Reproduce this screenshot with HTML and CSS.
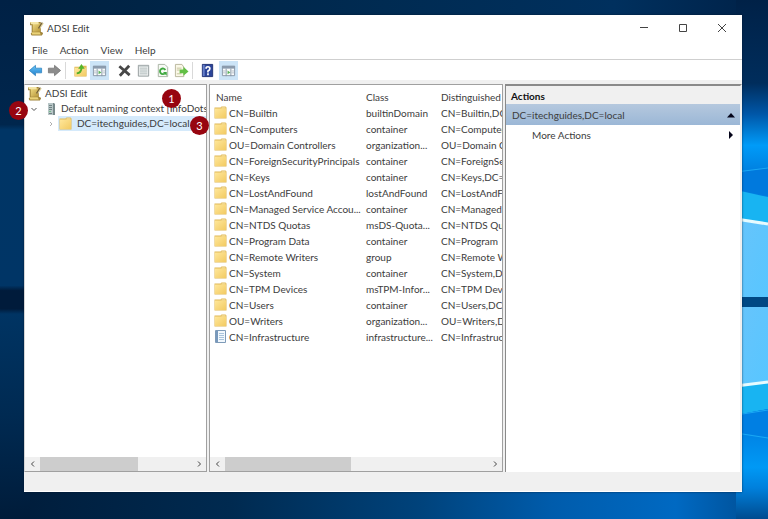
FILE: index.html
```html
<!DOCTYPE html>
<html lang="en">
<head>
<meta charset="utf-8">
<title>ADSI Edit</title>
<link rel="stylesheet" href="styles.css">
</head>
<body>
<svg class="wallpaper" viewBox="0 0 768 519" preserveAspectRatio="none" aria-hidden="true">
  <defs>
    <linearGradient id="sky"><stop offset="0" stop-color="#00203f"/><stop offset=".5" stop-color="#002b52"/><stop offset=".8" stop-color="#00305e"/><stop offset="1" stop-color="#002147"/></linearGradient>
    <linearGradient id="floor"><stop offset="0" stop-color="#001c3a"/><stop offset=".3" stop-color="#002a50"/><stop offset=".55" stop-color="#00437c"/><stop offset=".72" stop-color="#005cac"/><stop offset=".88" stop-color="#0069c2"/><stop offset="1" stop-color="#004b8f"/></linearGradient>
    <linearGradient id="left" x2="0" y2="1"><stop offset="0" stop-color="#002145"/><stop offset=".24" stop-color="#00264d"/><stop offset=".25" stop-color="#003565"/><stop offset=".55" stop-color="#003566"/><stop offset=".56" stop-color="#001b3b"/><stop offset=".595" stop-color="#001b3b"/><stop offset=".605" stop-color="#003463"/><stop offset=".8" stop-color="#002a52"/><stop offset="1" stop-color="#001c3a"/></linearGradient>
    <linearGradient id="right" x2="0" y2="1"><stop offset="0" stop-color="#002147"/><stop offset=".16" stop-color="#002d5c"/><stop offset=".22" stop-color="#0057a8"/><stop offset=".28" stop-color="#009bf8"/><stop offset=".33" stop-color="#0080e0"/><stop offset=".36" stop-color="#0080e0"/><stop offset=".8" stop-color="#0078dc"/><stop offset=".9" stop-color="#0099f5"/><stop offset=".94" stop-color="#0080dc"/><stop offset="1" stop-color="#004b8f"/></linearGradient>
    <linearGradient id="pane" x2="1" y2="1"><stop offset="0" stop-color="#67c4fb"/><stop offset="1" stop-color="#58c6ff"/></linearGradient>
  </defs>
  <path fill="url(#sky)" d="M0 0H768V30H0Z"/>
  <path fill="url(#floor)" d="M0 488H768V519H0Z"/>
  <path fill="url(#left)" d="M0 0H30V519H0Z"/>
  <path fill="url(#right)" d="M736 0H768V519H736Z"/>
  <path fill="#0079dd" d="M736 172L768 168V196L736 190Z"/>
  <path fill="#18b4f2" d="M736 190L768 197V226H736Z"/>
  <path fill="url(#pane)" d="M736 220L768 225V297H736Z"/>
  <path fill="#004884" d="M736 297H768V307H736Z"/>
  <path fill="url(#pane)" d="M736 307H768V382L736 386Z"/>
  <path fill="#18b4f2" d="M736 386L768 382V409L736 415Z"/>
  <path fill="#007fe3" d="M736 415L768 409V437L736 432Z"/>
  <path fill="none" stroke="#1aa8f5" d="M736 433L768 438M736 415L768 410M736 172L768 168"/>
  <path fill="none" stroke="#e6fbff" stroke-width="3" d="M736 219L768 224M736 386L768 382"/>
</svg>

<svg class="sprite" aria-hidden="true">
  <defs>
    <linearGradient id="fold" x2="1" y2="1"><stop offset="0" stop-color="#ffe79a"/><stop offset="1" stop-color="#f2ca62"/></linearGradient>
    <linearGradient id="gold" x2="1" y2="1"><stop offset="0" stop-color="#f1dd86"/><stop offset="1" stop-color="#b8973a"/></linearGradient>
    <linearGradient id="blue" x2="0" y2="1"><stop offset="0" stop-color="#6bc8fa"/><stop offset="1" stop-color="#1f7dcb"/></linearGradient>
  </defs>
  <symbol id="i-folder" viewBox="0 0 13 13">
    <path fill="#e0b856" d="M.5 1.500h6l1-1h4l1 1v11H.5Z"/><path fill="#fff1bf" d="M7.500 1.500h4v1h-4Z"/><path fill="url(#fold)" d="M1 2.500h11V12H1Z"/>
  </symbol>
  <symbol id="i-app" viewBox="0 0 14 14">
    <path fill="#a0843a" d="M1 1h10v9l2 1v1l-1 1.500H2.500L1.500 12l1-1V4H1Z"/><path fill="url(#gold)" d="M3 2h7.500v8H3.500V3Z"/><path fill="#f5e7a8" d="M1 1h8v2H2Z"/><path fill="#ead277" d="M2.500 10.500H10l1 2H3Z"/>
    <path fill="none" stroke="#715d33" stroke-width="1.500" d="M12.500 1.500L9 7"/><path fill="none" stroke="#ded19b" d="M13.300 2L10 7"/>
  </symbol>
  <symbol id="i-server" viewBox="0 0 10 14">
    <path fill="#78898b" d="M2 1h6l1 1v11H2Z"/><path fill="#b8c6c7" d="M2 1h5v12H2Z"/><path stroke="#708283" d="M3 3.500h3M3 5.500h3M3 7.500h3M3 11.500h3"/><path fill="#72bd8a" d="M3 9h2v1H3Z"/>
  </symbol>
  <symbol id="i-doc" viewBox="0 0 13 13">
    <path fill="#f2f8fd" stroke="#7e9bb8" d="M1.500 .5h10v12h-10Z"/><path fill="#7899bd" d="M2 1h2v11H2Z"/><path stroke="#a9c4dc" d="M5 3.500h5M5 5.500h5M5 7.500h5M5 9.500h5"/>
  </symbol>
  <symbol id="i-back" viewBox="0 0 16 16"><path fill="url(#blue)" stroke="#2e82bd" stroke-width=".8" d="M1.500 8L8 2.500V5.500H14.500V10.500H8V13.500Z"/></symbol>
  <symbol id="i-next" viewBox="0 0 16 16"><path fill="#8c8c8c" stroke="#727272" stroke-width=".8" d="M14.500 8L8 2.500V5.500H1.500V10.500H8V13.500Z"/></symbol>
  <symbol id="i-up" viewBox="0 0 16 16"><path fill="#e0b856" d="M1.500 4h6l1-1h6v11.500h-13Z"/><path fill="url(#fold)" d="M2 5h12v9H2Z"/><path fill="none" stroke="#4fae28" stroke-width="2" d="M4 11Q9 10.500 9 5"/><path fill="#55b52b" d="M9 1L12.500 6H5.500Z"/></symbol>
  <symbol id="i-panel" viewBox="0 0 16 16"><path fill="#f9fbfc" stroke="#8796a6" d="M1.500 3.500h13v10h-13Z"/><path fill="#8b9bad" d="M1 3h14v3H1Z"/><path stroke="#8796a6" d="M5.500 6v8M10.500 6v8"/><path fill="#59b259" d="M7 8l3 2-3 2Z"/><path stroke="#b5c0ca" d="M2 8.500h3M2 10.500h3M11 8.500h3M11 10.500h3"/></symbol>
  <symbol id="i-delete" viewBox="0 0 16 16"><path fill="none" stroke="#474747" stroke-width="3" d="M2.500 3.500L13.500 13M13 3L3 13.500"/></symbol>
  <symbol id="i-props" viewBox="0 0 16 16"><path fill="#eef1f1" stroke="#929b9c" d="M2.500 2.500h11v11.500h-11Z"/><path stroke="#b3bdbd" d="M4 5.500h8M4 7.500h8M4 9.500h8M4 11.500h8"/><path fill="#c4cccc" d="M3 3h10v1H3Z"/></symbol>
  <symbol id="i-refresh" viewBox="0 0 16 16"><path fill="#f7faf5" stroke="#a8b3a2" d="M3.500 1.500h7l3 3v10h-10Z"/><path fill="none" stroke="#3fa83f" stroke-width="2" d="M11 7.500A3 3 0 1 0 10.500 11"/><path fill="#3fa83f" d="M8.500 9.500H12.500V13.500Z"/></symbol>
  <symbol id="i-export" viewBox="0 0 16 16"><path fill="#faf8e8" stroke="#b8b59c" d="M1.500 1.500h7l2 3v10h-9Z"/><path stroke="#c5c19c" d="M3 5.500h5M3 7.500h3M3 11.500h5"/><path fill="#62bf45" d="M6 7h4V4l5.500 5L10 13.500V11H6Z"/></symbol>
  <symbol id="i-help" viewBox="0 0 16 16"><path fill="#2b4499" stroke="#203273" d="M2.500 1.500h11v13h-11Z"/><path fill="#667fc8" d="M3 2h2v12H3Z"/><path fill="none" stroke="#fff" stroke-width="1.800" d="M6.500 6Q6.500 4 8.500 4T10.500 6Q10.500 7.500 8.500 8.500V10M8.500 11v2"/></symbol>
</svg>

<main class="window">
  <header class="titlebar">
    <svg class="app-icon"><use href="#i-app"/></svg>
    <h1>ADSI Edit</h1>
    <div class="controls">
      <button aria-label="Minimize"><svg viewBox="0 0 10 10"><path d="M1 4.500h8"/></svg></button>
      <button aria-label="Maximize"><svg viewBox="0 0 10 10"><path d="M1.500 1.500h7v7h-7Z"/></svg></button>
      <button aria-label="Close"><svg viewBox="0 0 10 10"><path d="M1 1l8 8M9 1L1 9"/></svg></button>
    </div>
  </header>
  <nav class="menubar"><button>File</button><button>Action</button><button>View</button><button>Help</button></nav>
  <div class="toolbar">
    <button aria-label="Back"><svg><use href="#i-back"/></svg></button>
    <button aria-label="Forward"><svg><use href="#i-next"/></svg></button>
    <span class="sep"></span>
    <button aria-label="Up one level"><svg><use href="#i-up"/></svg></button>
    <button class="on" aria-label="Show console tree"><svg><use href="#i-panel"/></svg></button>
    <button class="apart" aria-label="Delete"><svg><use href="#i-delete"/></svg></button>
    <button aria-label="Properties"><svg><use href="#i-props"/></svg></button>
    <button aria-label="Refresh"><svg><use href="#i-refresh"/></svg></button>
    <button aria-label="Export list"><svg><use href="#i-export"/></svg></button>
    <span class="sep"></span>
    <button aria-label="Help"><svg><use href="#i-help"/></svg></button>
    <button class="on last" aria-label="Show action pane"><svg><use href="#i-panel"/></svg></button>
  </div>

  <div class="panes">
    <section class="pane tree-pane">
      <ul class="tree">
        <li><div class="node"><svg class="app-icon"><use href="#i-app"/></svg><span>ADSI Edit</span></div></li>
        <li><div class="node level1"><svg class="twist open" viewBox="0 0 8 8"><path d="M1.500 3L4 5.500 6.500 3"/></svg><svg class="server"><use href="#i-server"/></svg><span>Default naming context [InfoDots</span></div></li>
        <li><div class="node level2"><svg class="twist" viewBox="0 0 8 8"><path d="M3 2l2 2-2 2"/></svg><span class="selected"><svg class="icon"><use href="#i-folder"/></svg>DC=itechguides,DC=local</span></div></li>
      </ul>
      <div class="scrollbar"><button aria-label="Scroll left"><svg viewBox="0 0 8 8"><path d="M5 1.500L2.500 4 5 6.500"/></svg></button><div class="track"><div class="thumb tree-thumb"></div></div><button aria-label="Scroll right"><svg viewBox="0 0 8 8"><path d="M3 1.500L5.500 4 3 6.500"/></svg></button></div>
      <span class="badge one">1</span><span class="badge two">2</span><span class="badge three">3</span>
    </section>

    <section class="pane list-pane">
      <div class="list">
      <table>
        <colgroup><col class="c-name"><col class="c-class"><col class="c-dn"></colgroup>
        <thead><tr><th>Name</th><th>Class</th><th>Distinguished</th></tr></thead>
        <tbody>
          <tr><td><svg class="icon"><use href="#i-folder"/></svg>CN=Builtin</td><td>builtinDomain</td><td>CN=Builtin,DC=</td></tr>
          <tr><td><svg class="icon"><use href="#i-folder"/></svg>CN=Computers</td><td>container</td><td>CN=Computers</td></tr>
          <tr><td><svg class="icon"><use href="#i-folder"/></svg>OU=Domain Controllers</td><td>organization...</td><td>OU=Domain C</td></tr>
          <tr><td><svg class="icon"><use href="#i-folder"/></svg>CN=ForeignSecurityPrincipals</td><td>container</td><td>CN=ForeignSe</td></tr>
          <tr><td><svg class="icon"><use href="#i-folder"/></svg>CN=Keys</td><td>container</td><td>CN=Keys,DC=i</td></tr>
          <tr><td><svg class="icon"><use href="#i-folder"/></svg>CN=LostAndFound</td><td>lostAndFound</td><td>CN=LostAndFo</td></tr>
          <tr><td><svg class="icon"><use href="#i-folder"/></svg>CN=Managed Service Accou...</td><td>container</td><td>CN=Managed </td></tr>
          <tr><td><svg class="icon"><use href="#i-folder"/></svg>CN=NTDS Quotas</td><td>msDS-Quota...</td><td>CN=NTDS Quo</td></tr>
          <tr><td><svg class="icon"><use href="#i-folder"/></svg>CN=Program Data</td><td>container</td><td>CN=Program </td></tr>
          <tr><td><svg class="icon"><use href="#i-folder"/></svg>CN=Remote Writers</td><td>group</td><td>CN=Remote W</td></tr>
          <tr><td><svg class="icon"><use href="#i-folder"/></svg>CN=System</td><td>container</td><td>CN=System,DC</td></tr>
          <tr><td><svg class="icon"><use href="#i-folder"/></svg>CN=TPM Devices</td><td>msTPM-Infor...</td><td>CN=TPM Devi</td></tr>
          <tr><td><svg class="icon"><use href="#i-folder"/></svg>CN=Users</td><td>container</td><td>CN=Users,DC=</td></tr>
          <tr><td><svg class="icon"><use href="#i-folder"/></svg>OU=Writers</td><td>organization...</td><td>OU=Writers,DC</td></tr>
          <tr><td><svg class="icon"><use href="#i-doc"/></svg>CN=Infrastructure</td><td>infrastructure...</td><td>CN=Infrastruct</td></tr>
        </tbody>
      </table>
      </div>
      <div class="scrollbar"><button aria-label="Scroll left"><svg viewBox="0 0 8 8"><path d="M5 1.500L2.500 4 5 6.500"/></svg></button><div class="track"><div class="thumb list-thumb"></div></div><button aria-label="Scroll right"><svg viewBox="0 0 8 8"><path d="M3 1.500L5.500 4 3 6.500"/></svg></button></div>
    </section>

    <aside class="actions">
      <h2>Actions</h2>
      <button class="group">DC=itechguides,DC=local<svg viewBox="0 0 8 8"><path d="M0 6.500L4 2l4 4.500Z"/></svg></button>
      <button class="more">More Actions<svg viewBox="0 0 8 8"><path d="M2 0L6 4 2 8Z"/></svg></button>
    </aside>
  </div>
  <footer class="status"></footer>
</main>
</body>
</html>
```

FILE: styles.css
```css
* { box-sizing: border-box; }

body {
  display: flex;
  min-height: 100vh;
  margin: 0;
  padding: 15px 26px 27px 24px;
  background: #00264d;
  color: #3c3c3c;
  font: 10px/16px Lato, "Open Sans", sans-serif;
}

button {
  padding: 0;
  border: 0;
  background: none;
  color: inherit;
  font: inherit;
}

svg { display: block; flex: none; }

.wallpaper {
  position: absolute;
  inset: 0;
  z-index: -1;
  width: 100%;
  height: 100%;
}

.sprite { position: absolute; width: 0; height: 0; }

.window {
  display: flex;
  flex: 1;
  flex-direction: column;
  min-width: 0;
  background: #f0f0f0;
  box-shadow: 0 0 2px rgba(0, 20, 40, .7);
}

.titlebar {
  display: flex;
  align-items: center;
  height: 26px;
  padding: 0 1px 0 5px;
  background: #fff;
}

.app-icon { width: 15px; height: 15px; }

h1 {
  margin: 0 0 0 3px;
  font-size: 10px;
  font-weight: 400;
}

.controls { display: flex; margin-left: auto; }

.controls button {
  display: grid;
  place-items: center;
  width: 39px;
  height: 26px;
}

.controls svg { width: 10px; height: 10px; fill: none; stroke: #444; }

.menubar {
  display: flex;
  gap: 12px;
  height: 19px;
  padding-left: 8px;
  border-bottom: 1px solid #cfcfcf;
  background: #fff;
  line-height: 18px;
}

.toolbar {
  display: flex;
  align-items: center;
  height: 20px;
  padding-left: 2px;
  background: #fff;
}

.toolbar button {
  display: grid;
  place-items: center;
  width: 19px;
  height: 19px;
}

.toolbar svg { width: 15px; height: 15px; }
.toolbar .on { background: #cce4f7; }
.toolbar .apart { margin-left: 6px; }
.toolbar .last { margin-left: 2px; }

.sep {
  width: 1px;
  height: 17px;
  margin: 0 5px 0 1px;
  background: #d9d9d9;
}

.panes {
  display: grid;
  flex: 1;
  grid-template-columns: minmax(0, 183fr) minmax(0, 294fr) minmax(0, 237fr);
  gap: 2px;
  padding-top: 4px;
}

.pane {
  position: relative;
  display: flex;
  flex-direction: column;
  justify-content: space-between;
  border: 1px solid #a0a0a0;
  background: #fff;
}

.tree-pane { border-left-color: #d5d5d5; }

.tree {
  margin: 0;
  padding: 1px 0 0;
  overflow: hidden;
  list-style: none;
  line-height: 15px;
}

.node {
  display: flex;
  align-items: center;
  height: 15px;
  padding-left: 2px;
  white-space: nowrap;
}

.node > span { margin-left: 3px; }
.level1 { padding-left: 5px; }
.level2 { padding-left: 22px; }

.twist { width: 8px; height: 8px; fill: none; stroke: #b0b0b0; }
.open { stroke: #555; }
.server { width: 10px; height: 14px; margin: 0 2px 0 8px; }

.node > .selected {
  display: flex;
  align-items: center;
  flex: 1;
  gap: 5px;
  padding-left: 1px;
  background: #d5eafb;
}

.icon { width: 13px; height: 13px; }

.badge {
  position: absolute;
  display: grid;
  place-items: center;
  width: 19px;
  height: 19px;
  border-radius: 50%;
  background: #970510;
  color: #fff;
  font-size: 11px;
}

.one { top: 4px; right: 25px; }
.two { top: 16px; left: -16px; }
.three { top: 31px; right: -3px; z-index: 1; }

.scrollbar {
  display: flex;
  height: 14px;
  background: #f0f0f0;
}

.scrollbar button {
  display: grid;
  place-items: center;
  width: 15px;
}

.scrollbar svg { width: 8px; height: 8px; fill: none; stroke: #444; }
.track { flex: 1; }
.thumb { height: 100%; background: #cdcdcd; }
.tree-thumb { width: 65%; }
.list-thumb { width: 48%; }

.list { overflow: hidden; padding-top: 4px; }

table {
  width: 100%;
  border-collapse: collapse;
  table-layout: fixed;
}

.c-name { width: 154px; }
.c-class { width: 75px; }

th, td {
  height: 16px;
  padding: 0 0 0 2px;
  overflow: hidden;
  font-weight: 400;
  text-align: left;
  white-space: nowrap;
}

th:first-child { padding-left: 6px; }
td:first-child { padding-left: 4px; }
td .icon { float: left; margin: 1px 2px 0 0; }

.actions {
  border-top: 2px solid #8a8a8a;
  border-right: 2px solid #f0f0f0;
  border-left: 1px solid #8a8a8a;
  background: #fff;
}

h2 {
  margin: 0;
  padding: 2px 5px 0;
  background: #f0f0f0;
  font-size: 10px;
  font-weight: 700;
  color: #111;
}

.actions button {
  display: flex;
  align-items: center;
  justify-content: space-between;
  width: 100%;
  height: 20px;
  padding: 0 5px 0 6px;
}

.actions svg { width: 8px; height: 8px; fill: #05051a; }

.actions .group { background: linear-gradient(#b5c8de, #9bb7d6); height: 21px; }
.actions .more { padding-left: 26px; }

.status {
  height: 20px;
  border-bottom: 1px solid #fff;
}
```
